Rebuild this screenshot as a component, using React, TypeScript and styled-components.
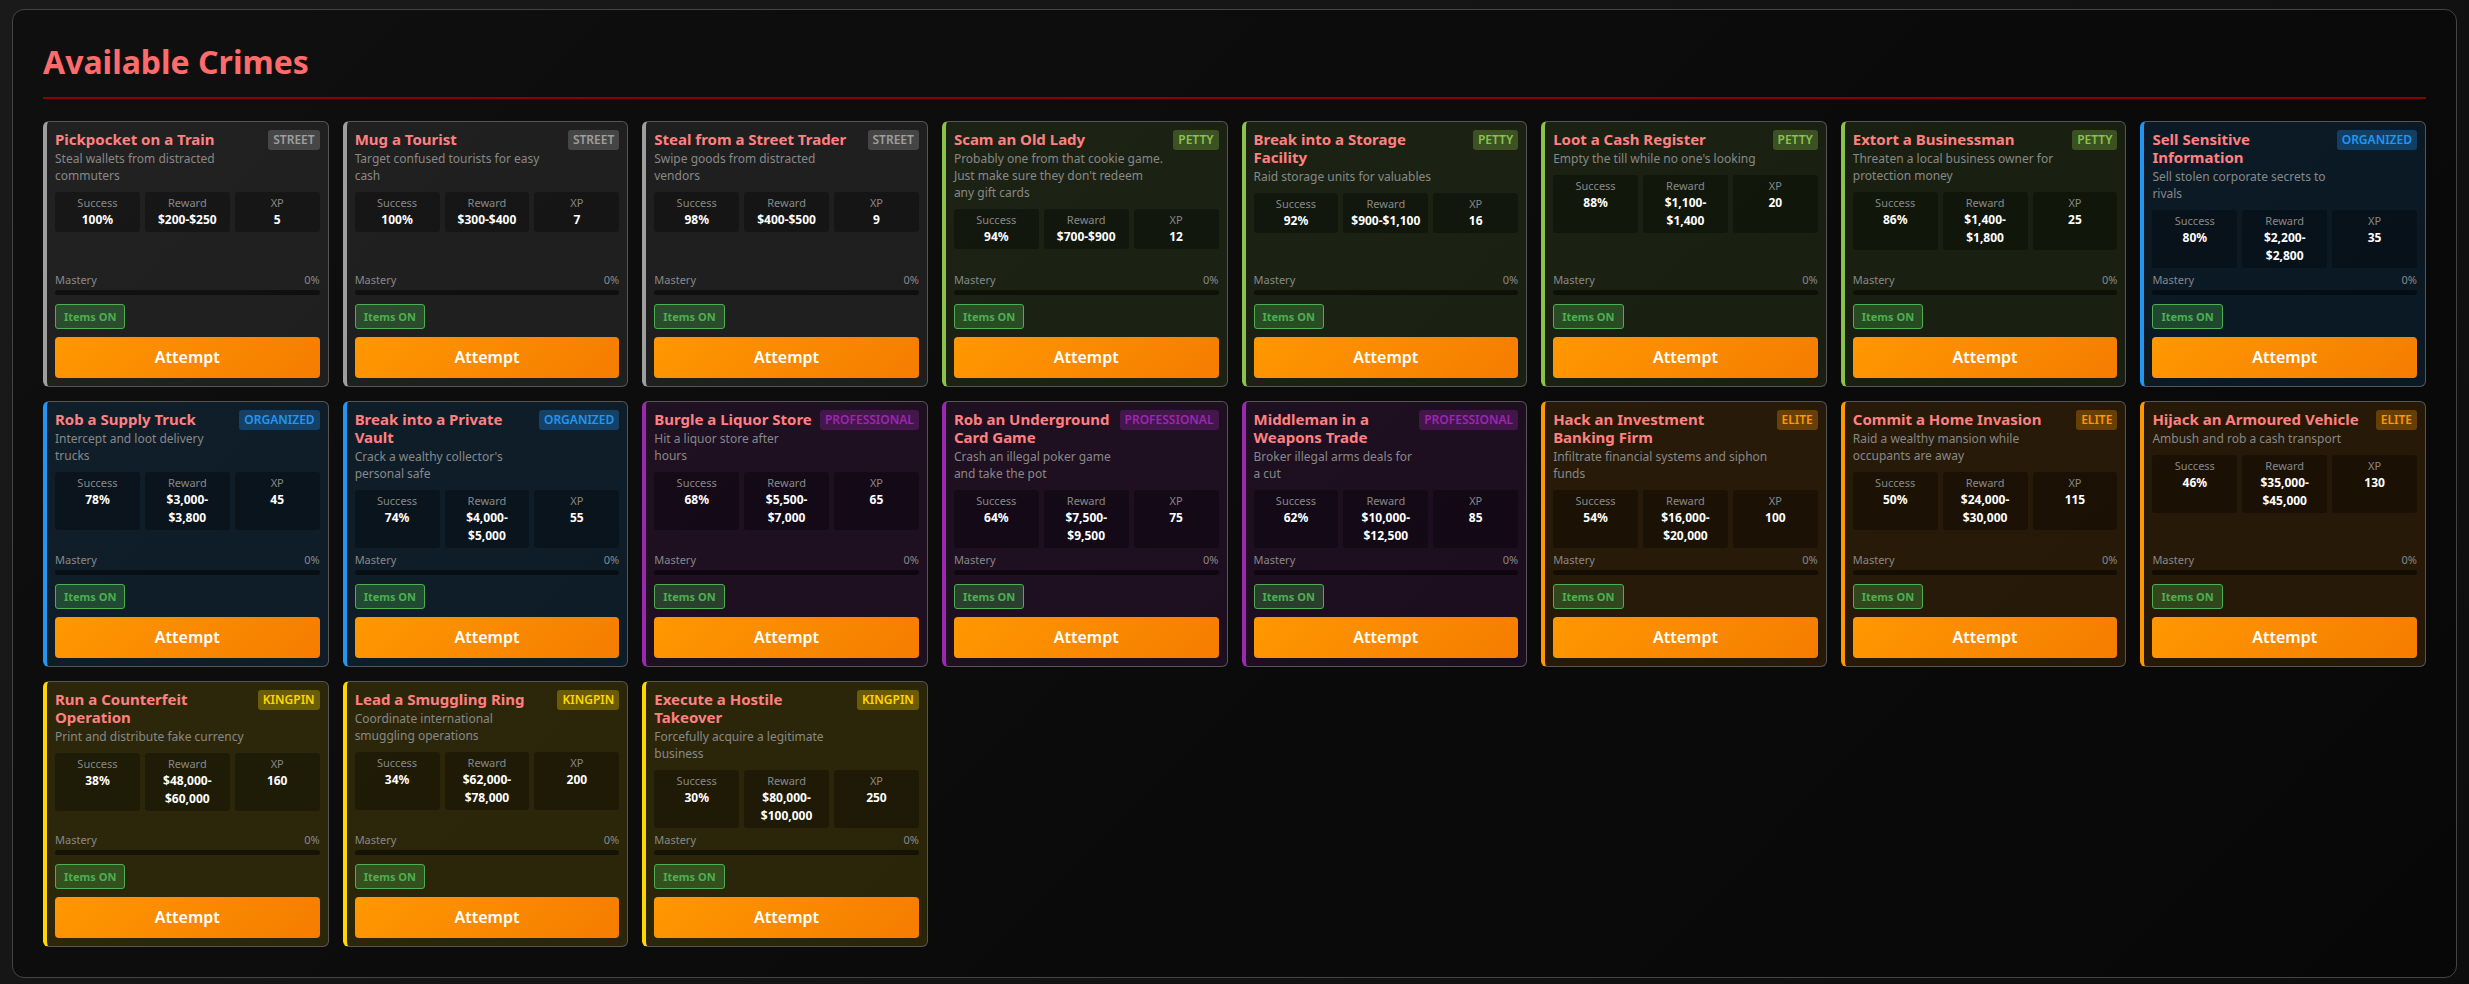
import React from 'react';
import styled, { createGlobalStyle } from 'styled-components';

const GlobalStyle = createGlobalStyle`
  *, *::before, *::after { box-sizing: border-box; }
  html { min-height: 100%; background: #0a0a0a; }
  body {
    margin: 0;
    min-height: 100vh;
    background: linear-gradient(135deg, #1a1a1a 0%, #0d0d0d 100%);
    color: #e0e0e0;
    font-family: "Noto Sans", "Open Sans", sans-serif;
    font-size: 16px;
  }
`;

type Tier = 'street' | 'petty' | 'organized' | 'professional' | 'elite' | 'kingpin';

interface TierStyle {
  accent: string;
  tint: string;
  badge: string;
}

const TIERS: Record<Tier, TierStyle> = {
  street: { accent: '#9e9e9e', tint: 'rgba(158, 158, 158, 0.13)', badge: 'rgba(158, 158, 158, 0.3)' },
  petty: { accent: '#8bc34a', tint: 'rgba(139, 195, 74, 0.12)', badge: 'rgba(139, 195, 74, 0.3)' },
  organized: { accent: '#2196f3', tint: 'rgba(33, 150, 243, 0.12)', badge: 'rgba(33, 150, 243, 0.3)' },
  professional: { accent: '#9c27b0', tint: 'rgba(156, 39, 176, 0.13)', badge: 'rgba(156, 39, 176, 0.3)' },
  elite: { accent: '#ff9800', tint: 'rgba(255, 152, 0, 0.12)', badge: 'rgba(255, 152, 0, 0.3)' },
  kingpin: { accent: '#ffd700', tint: 'rgba(255, 215, 0, 0.13)', badge: 'rgba(255, 215, 0, 0.3)' },
};

interface Crime {
  name: string;
  description: string;
  tier: Tier;
  success: number;
  reward: [min: string, max: string];
  xp: number;
}

const CRIMES: Crime[] = [
  { name: 'Pickpocket on a Train', description: 'Steal wallets from distracted commuters', tier: 'street', success: 100, reward: ['$200', '$250'], xp: 5 },
  { name: 'Mug a Tourist', description: 'Target confused tourists for easy cash', tier: 'street', success: 100, reward: ['$300', '$400'], xp: 7 },
  { name: 'Steal from a Street Trader', description: 'Swipe goods from distracted vendors', tier: 'street', success: 98, reward: ['$400', '$500'], xp: 9 },
  { name: 'Scam an Old Lady', description: "Probably one from that cookie game. Just make sure they don't redeem any gift cards", tier: 'petty', success: 94, reward: ['$700', '$900'], xp: 12 },
  { name: 'Break into a Storage\nFacility', description: 'Raid storage units for valuables', tier: 'petty', success: 92, reward: ['$900', '$1,100'], xp: 16 },
  { name: 'Loot a Cash Register', description: "Empty the till while no one's looking", tier: 'petty', success: 88, reward: ['$1,100', '$1,400'], xp: 20 },
  { name: 'Extort a Businessman', description: 'Threaten a local business owner for protection money', tier: 'petty', success: 86, reward: ['$1,400', '$1,800'], xp: 25 },
  { name: 'Sell Sensitive Information', description: 'Sell stolen corporate secrets to rivals', tier: 'organized', success: 80, reward: ['$2,200', '$2,800'], xp: 35 },
  { name: 'Rob a Supply Truck', description: 'Intercept and loot delivery trucks', tier: 'organized', success: 78, reward: ['$3,000', '$3,800'], xp: 45 },
  { name: 'Break into a Private Vault', description: "Crack a wealthy collector's personal safe", tier: 'organized', success: 74, reward: ['$4,000', '$5,000'], xp: 55 },
  { name: 'Burgle a Liquor Store', description: 'Hit a liquor store after hours', tier: 'professional', success: 68, reward: ['$5,500', '$7,000'], xp: 65 },
  { name: 'Rob an Underground Card Game', description: 'Crash an illegal poker game and take the pot', tier: 'professional', success: 64, reward: ['$7,500', '$9,500'], xp: 75 },
  { name: 'Middleman in a Weapons Trade', description: 'Broker illegal arms deals for a cut', tier: 'professional', success: 62, reward: ['$10,000', '$12,500'], xp: 85 },
  { name: 'Hack an Investment\nBanking Firm', description: 'Infiltrate financial systems and siphon funds', tier: 'elite', success: 54, reward: ['$16,000', '$20,000'], xp: 100 },
  { name: 'Commit a Home Invasion', description: 'Raid a wealthy mansion while occupants are away', tier: 'elite', success: 50, reward: ['$24,000', '$30,000'], xp: 115 },
  { name: 'Hijack an Armoured Vehicle', description: 'Ambush and rob a cash transport', tier: 'elite', success: 46, reward: ['$35,000', '$45,000'], xp: 130 },
  { name: 'Run a Counterfeit Operation', description: 'Print and distribute fake currency', tier: 'kingpin', success: 38, reward: ['$48,000', '$60,000'], xp: 160 },
  { name: 'Lead a Smuggling Ring', description: 'Coordinate international smuggling operations', tier: 'kingpin', success: 34, reward: ['$62,000', '$78,000'], xp: 200 },
  { name: 'Execute a Hostile Takeover', description: 'Forcefully acquire a legitimate business', tier: 'kingpin', success: 30, reward: ['$80,000', '$100,000'], xp: 250 },
];

const Page = styled.div`
  padding: 9px 12px 6px;
`;

const Panel = styled.main`
  padding: 30px;
  border: 1px solid #444;
  border-radius: 12px;
  background: rgba(0, 0, 0, 0.4);
`;

const PanelTitle = styled.h1`
  margin: 0 0 22px;
  padding-bottom: 13px;
  border-bottom: 2px solid #8b0000;
  color: #ff6b6b;
  font-size: 32px;
  font-weight: 700;
  line-height: 44px;
`;

const CrimeGrid = styled.div`
  display: grid;
  grid-template-columns: repeat(auto-fill, minmax(280px, 1fr));
  gap: 14px;
`;

const Card = styled.article<{ $tier: Tier }>`
  display: flex;
  flex-direction: column;
  padding: 8px;
  border: 1px solid #555;
  border-left: 4px solid ${({ $tier }) => TIERS[$tier].accent};
  border-radius: 6px;
  background: ${({ $tier }) => TIERS[$tier].tint};
`;

const CardHeader = styled.header`
  display: flex;
  align-items: flex-start;
  justify-content: space-between;
  gap: 7px;
  margin-bottom: 8px;
`;

const CardName = styled.h2`
  margin: 0 0 2px;
  color: #ff8080;
  font-size: 15px;
  font-weight: 700;
  line-height: 18px;
  white-space: pre-line;
`;

const CardDescription = styled.p`
  margin: 0;
  color: #888;
  font-size: 12px;
  line-height: 17px;
`;

const TierBadge = styled.span<{ $tier: Tier }>`
  flex-shrink: 0;
  padding: 2px 5px;
  border-radius: 3px;
  background: ${({ $tier }) => TIERS[$tier].badge};
  color: ${({ $tier }) => TIERS[$tier].accent};
  font-size: 12px;
  font-weight: 600;
  line-height: 16px;
  text-transform: uppercase;
`;

const Stats = styled.dl`
  display: grid;
  grid-template-columns: repeat(3, minmax(0, 1fr));
  gap: 5px;
  margin: 0;
`;

const Stat = styled.div`
  padding: 3px;
  border-radius: 3px;
  background: rgba(0, 0, 0, 0.3);
  text-align: center;
`;

const StatLabel = styled.dt`
  color: #888;
  font-size: 11px;
  line-height: 16px;
`;

const StatValue = styled.dd`
  margin: 0;
  color: #fff;
  font-size: 12px;
  font-weight: 700;
  line-height: 18px;
`;

const Mastery = styled.div`
  margin-top: auto;
  padding-top: 4px;
`;

const MasteryLabel = styled.div`
  display: flex;
  justify-content: space-between;
  margin-bottom: 2px;
  color: #888;
  font-size: 11px;
  line-height: 16px;
`;

const MasteryTrack = styled.div`
  height: 5px;
  border-radius: 3px;
  background: rgba(0, 0, 0, 0.5);
  overflow: hidden;
`;

const MasteryFill = styled.div`
  height: 100%;
  background: #4caf50;
`;

const ItemsToggle = styled.button`
  align-self: flex-start;
  margin: 9px 0 8px;
  padding: 4px 8px;
  border: 1px solid #4caf50;
  border-radius: 3px;
  background: rgba(76, 175, 80, 0.3);
  color: #4caf50;
  font-family: inherit;
  font-size: 11px;
  font-weight: 700;
  line-height: 15px;
  cursor: pointer;
`;

const AttemptButton = styled.button`
  padding: 10px;
  border: 0;
  border-radius: 4px;
  background: linear-gradient(135deg, #ff9800, #f57c00);
  color: #fff;
  font-family: inherit;
  font-size: 16px;
  font-weight: 600;
  line-height: 21px;
  cursor: pointer;
`;

function CrimeCard({ crime }: { crime: Crime }) {
  const [itemsOn, setItemsOn] = React.useState(true);
  const mastery = 0;
  const [minReward, maxReward] = crime.reward;

  return (
    <Card $tier={crime.tier}>
      <CardHeader>
        <div>
          <CardName>{crime.name}</CardName>
          <CardDescription>{crime.description}</CardDescription>
        </div>
        <TierBadge $tier={crime.tier}>{crime.tier}</TierBadge>
      </CardHeader>
      <Stats>
        <Stat>
          <StatLabel>Success</StatLabel>
          <StatValue>{`${crime.success}%`}</StatValue>
        </Stat>
        <Stat>
          <StatLabel>Reward</StatLabel>
          <StatValue>
            {`${minReward}-`}
            <wbr />
            {maxReward}
          </StatValue>
        </Stat>
        <Stat>
          <StatLabel>XP</StatLabel>
          <StatValue>{crime.xp}</StatValue>
        </Stat>
      </Stats>
      <Mastery>
        <MasteryLabel>
          <span>Mastery</span>
          <span>{`${mastery}%`}</span>
        </MasteryLabel>
        <MasteryTrack role="progressbar" aria-label="Mastery" aria-valuemin={0} aria-valuemax={100} aria-valuenow={mastery}>
          <MasteryFill style={{ width: `${mastery}%` }} />
        </MasteryTrack>
      </Mastery>
      <ItemsToggle type="button" aria-pressed={itemsOn} onClick={() => setItemsOn(!itemsOn)}>
        {itemsOn ? 'Items ON' : 'Items OFF'}
      </ItemsToggle>
      <AttemptButton type="button">Attempt</AttemptButton>
    </Card>
  );
}

export default function App() {
  return (
    <>
      <GlobalStyle />
      <Page>
        <Panel>
          <PanelTitle>Available Crimes</PanelTitle>
          <CrimeGrid>
            {CRIMES.map((crime) => (
              <CrimeCard key={crime.name} crime={crime} />
            ))}
          </CrimeGrid>
        </Panel>
      </Page>
    </>
  );
}
